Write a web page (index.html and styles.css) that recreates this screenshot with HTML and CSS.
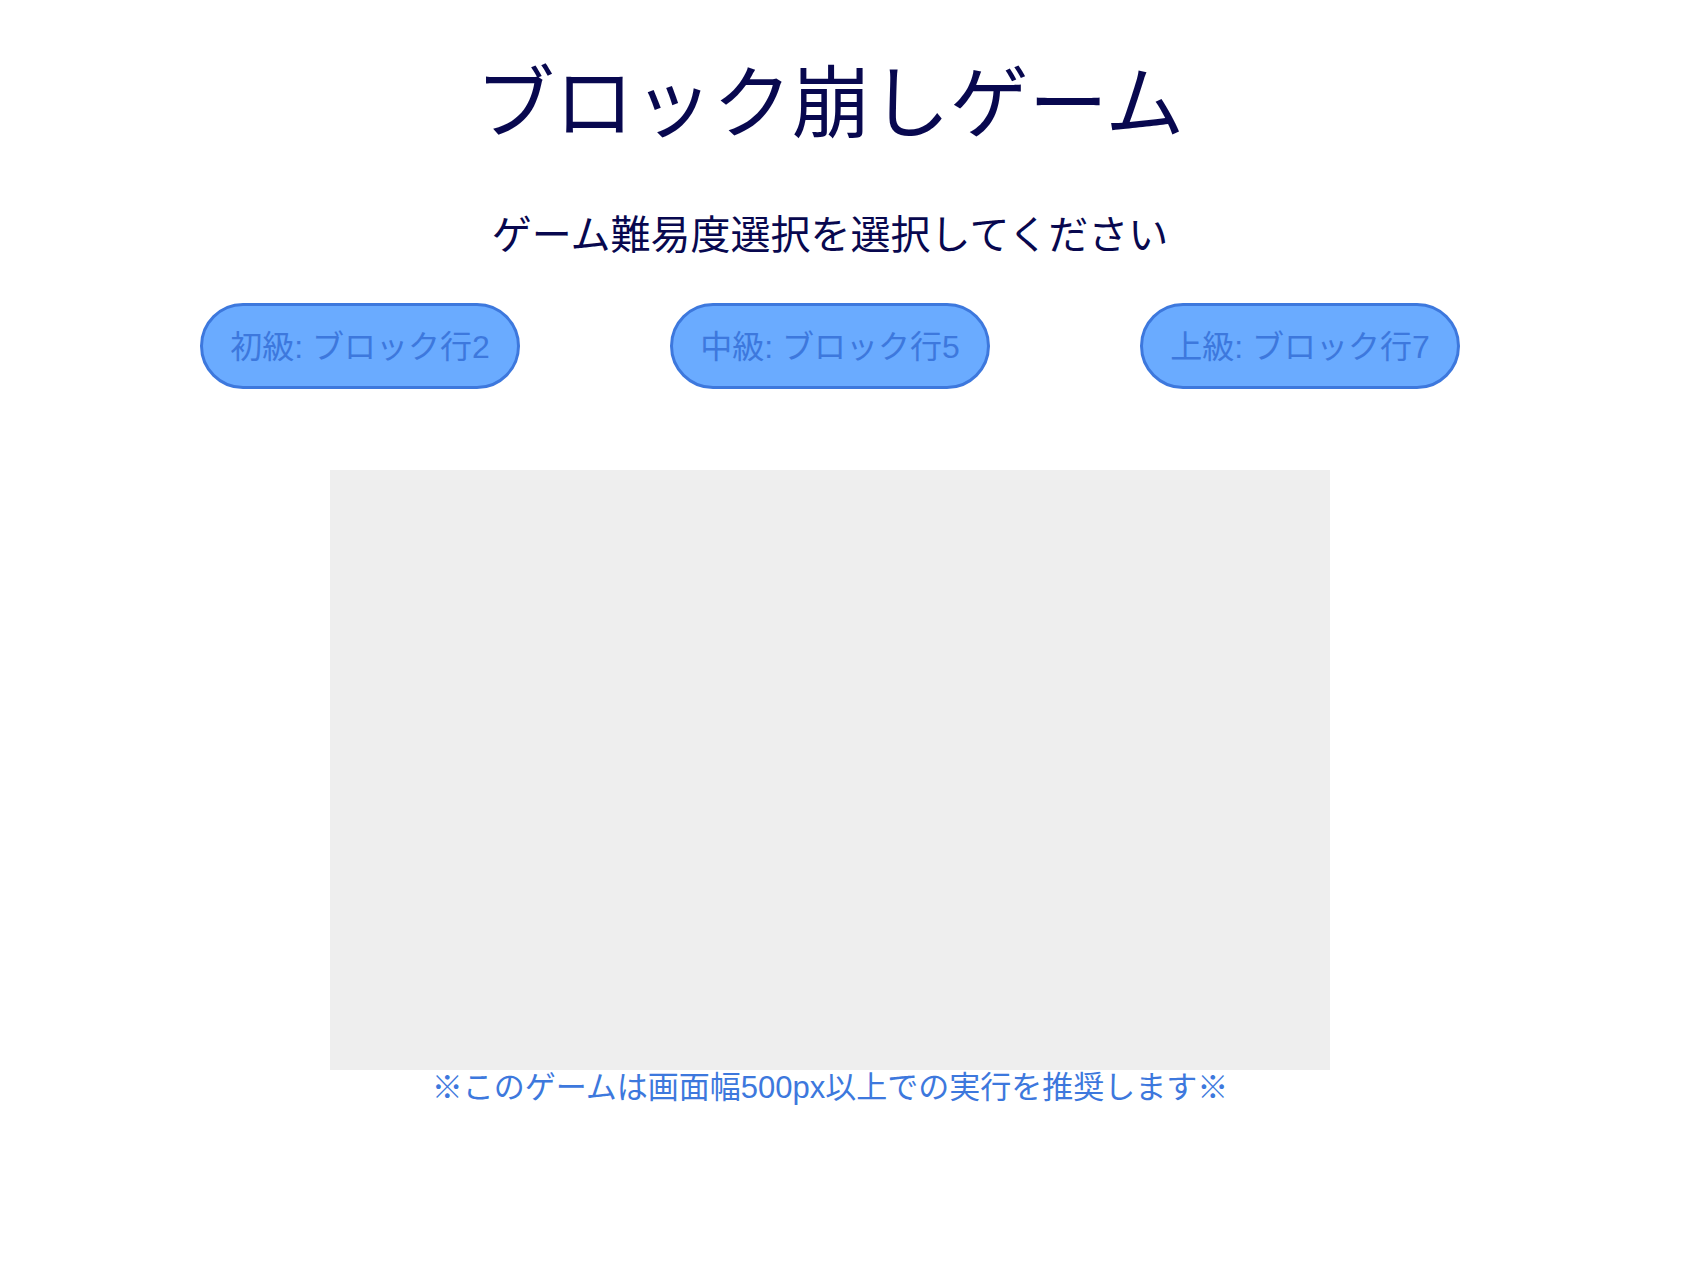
FILE: index.html
```html
<!DOCTYPE html>
<html lang="ja">
<head>
<meta charset="utf-8">
<title>ブロック崩しゲーム</title>
<link rel="stylesheet" href="styles.css">
</head>
<body>
<main class="page">
  <h1 class="title">ブロック崩しゲーム</h1>
  <h2 class="subtitle">ゲーム難易度選択を選択してください</h2>
  <div class="levels">
    <button class="level">初級: ブロック行2</button>
    <button class="level">中級: ブロック行5</button>
    <button class="level">上級: ブロック行7</button>
  </div>
  <div class="board"></div>
  <p class="note">※このゲームは画面幅500px以上での実行を推奨します※</p>
</main>
</body>
</html>
```

FILE: styles.css
```css
html, body {
  margin: 0;
  padding: 0;
  background: #ffffff;
}
body {
  font-family: "Liberation Sans", "Noto Sans CJK JP", sans-serif;
}
.page {
  width: 1660px;
  display: flex;
  flex-direction: column;
  align-items: center;
}
.title {
  margin: 58px 0 0;
  font-size: 79px;
  line-height: 94px;
  font-weight: 400;
  color: #08084f;
}
.subtitle {
  margin: 60px 0 0;
  font-size: 40px;
  line-height: 47px;
  font-weight: 400;
  color: #08084f;
}
.levels {
  margin-top: 44px;
  width: 1410px;
  display: grid;
  grid-template-columns: repeat(3, 1fr);
  justify-items: center;
}
.level {
  width: 320px;
  height: 86px;
  box-sizing: border-box;
  border: 3px solid #3d78dd;
  border-radius: 43px;
  background: #6aabff;
  color: #3d78dd;
  font-family: "Liberation Sans", "Noto Sans CJK JP", sans-serif;
  font-size: 32px;
  padding: 0 0 5px;
  display: flex;
  align-items: center;
  justify-content: center;
}
.board {
  margin-top: 81px;
  width: 1000px;
  height: 600px;
  background: #eeeeee;
}
.note {
  margin: 0;
  font-size: 31px;
  line-height: 36px;
  color: #3d78dd;
}
```
